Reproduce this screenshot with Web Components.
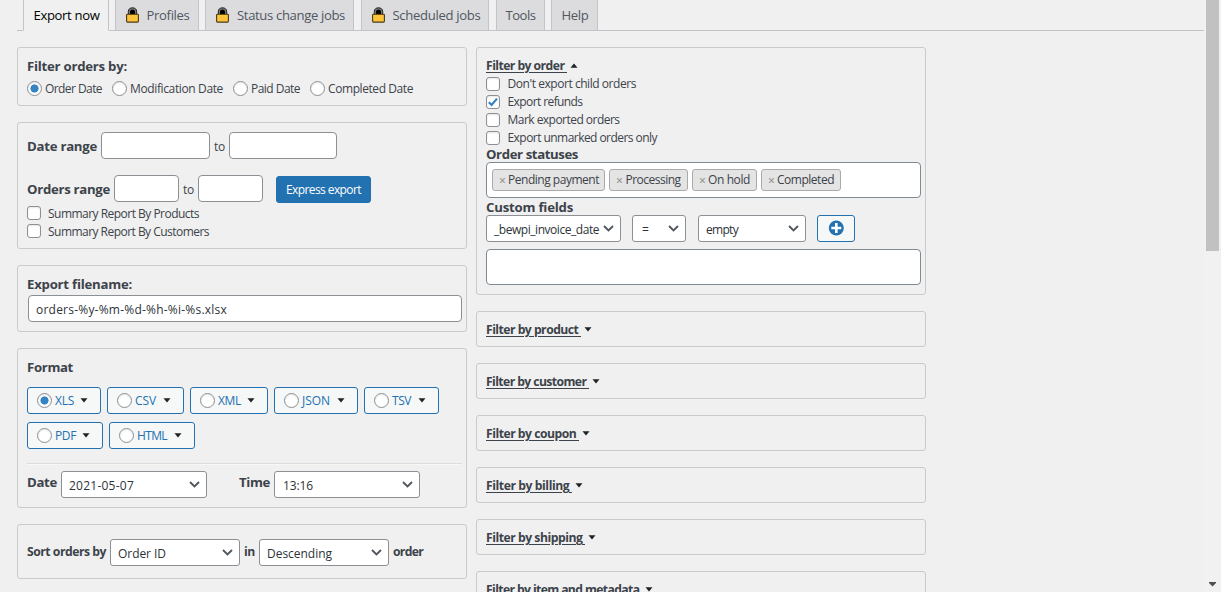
<!DOCTYPE html>
<html lang="en">
<head>
<meta charset="utf-8">
<title>Export orders</title>
<style>
  html, body {
    margin: 0;
    height: 100%;
    overflow: hidden;
    background: #f0f0f0;
  }
  body {
    font: 12px/18px "Open Sans", "Noto Sans", sans-serif;
    color: #3c434a;
  }
</style>
</head>
<body>
<export-page></export-page>

<script>
const define = (name, css, html, setup) => {
  customElements.define(name, class extends HTMLElement {
    constructor() {
      super();
      this.attachShadow({ mode: 'open' });
    }

    connectedCallback() {
      this.shadowRoot.innerHTML = `<style>* { box-sizing: border-box; } ${css}</style>${html}`;
      if (setup) setup(this, this.shadowRoot);
    }
  });
};

// Text run with a set width: the tracking is spread over its characters.
define('ui-text', `
  :host {
    display: inline-block;
    flex: none;
    white-space: pre;
  }
  :host([bold]) { font-weight: 700; }
  :host([semi]) { font-weight: 700; font-size: 12.2px; }
  :host([big]) { font-size: 13.2px; }
  :host([link]) span { text-decoration: underline; text-underline-offset: 2px; }
`, '<span><slot></slot></span>', (host, root) => {
  const w = parseFloat(host.getAttribute('w'));
  if (!w) return;
  const span = root.querySelector('span');
  const natural = span.getBoundingClientRect().width;
  host.style.letterSpacing = `${(w - natural) / host.textContent.length}px`;
  host.style.width = `${w}px`;
});

define('ui-row', `
  :host {
    display: flex;
    align-items: center;
    flex: none;
  }
`, '<slot></slot>', (host) => {
  for (const [attr, prop] of [['h', 'height'], ['gap', 'gap'], ['top', 'marginTop']]) {
    if (host.hasAttribute(attr)) host.style[prop] = `${host.getAttribute(attr)}px`;
  }
});

define('ui-panel', `
  :host {
    display: flex;
    flex-direction: column;
    box-sizing: border-box;
    flex: none;
    width: 450px;
    padding: 0 4px 0 9px;
    border: 1px solid #c9cacc;
    border-radius: 3px;
  }
`, '<slot></slot>', (host) => {
  host.style.height = `${host.getAttribute('h')}px`;
});

define('ui-radio', `
  :host {
    display: block;
    flex: none;
    box-sizing: border-box;
    width: 15px;
    height: 15px;
    margin-left: -0.5px;
    margin-right: -0.5px;
    border: 1px solid #8c8f94;
    border-radius: 50%;
    background: #fff;
    box-shadow: inset 0 1px 2px rgba(0, 0, 0, 0.1);
  }
  :host([checked]) { background: radial-gradient(circle, #3582c4 3.7px, #fff 4.4px); }
`, '');

define('ui-checkbox', `
  :host {
    display: block;
    flex: none;
    box-sizing: border-box;
    width: 14px;
    height: 14px;
    border: 1px solid #8c8f94;
    border-radius: 3px;
    background: #fff;
    box-shadow: inset 0 1px 2px rgba(0, 0, 0, 0.1);
  }
  svg { display: none; }
  :host([checked]) svg { display: block; }
`, `<svg width="12" height="12" viewBox="0 0 12 12">
  <path d="M1.8 6.2 4.6 9 10 2.6" fill="none" stroke="#3582c4" stroke-width="2.2"/>
</svg>`);

define('ui-input', `
  :host {
    display: flex;
    align-items: center;
    flex: none;
    box-sizing: border-box;
    height: 27px;
    padding: 2px 7px 0;
    border: 1px solid #8c8f94;
    border-radius: 4px;
    background: #fff;
    color: #2c3338;
  }
  :host([tall]) {
    height: 36px;
    padding: 0 5px;
    gap: 4px;
    border-color: #7e8993;
  }
`, '<slot></slot>', (host) => {
  host.style.width = `${host.getAttribute('w')}px`;
});

define('ui-select', `
  :host {
    display: flex;
    align-items: center;
    justify-content: space-between;
    flex: none;
    box-sizing: border-box;
    height: 27px;
    padding: 0 6px 0 7px;
    border: 1px solid #8c8f94;
    border-radius: 3px;
    background: #fff;
    color: #2c3338;
  }
  div { padding-top: 2px; }
`, `<div><slot></slot></div>
<svg width="11" height="7" viewBox="0 0 11 7">
  <path d="M1 1 5.5 5.4 10 1" fill="none" stroke="#50575e" stroke-width="1.9"/>
</svg>`, (host) => {
  host.style.width = `${host.getAttribute('w')}px`;
});

define('ui-arrow', `
  :host { display: block; flex: none; }
  :host([up]) svg { transform: rotate(180deg); }
  svg { display: block; }
`, `<svg width="8" height="5" viewBox="0 0 8 5"><path d="M0.5 0.2H7.5L4 4.4Z" fill="#1d2327"/></svg>`);

define('ui-button', `
  :host {
    display: flex;
    align-items: center;
    flex: none;
    justify-content: center;
    box-sizing: border-box;
    height: 27px;
    border: 1px solid #2271b1;
    border-radius: 3px;
    background: #f6f7f7;
    color: #2271b1;
  }
  :host([primary]) { background: #2271b1; color: #fff; }
`, '<slot></slot>', (host) => {
  host.style.width = `${host.getAttribute('w')}px`;
});

define('format-option', `
  :host { display: block; }
  ui-button { justify-content: flex-start; padding-left: 9px; }
  ui-text { margin-left: 4px; }
  ui-arrow { margin-left: auto; margin-right: 12px; }
`, '', (host, root) => {
  const checked = host.hasAttribute('checked') ? 'checked' : '';
  root.innerHTML += `
    <ui-button w="${host.getAttribute('w')}">
      <ui-radio ${checked}></ui-radio>
      <ui-text w="${host.getAttribute('tw')}">${host.getAttribute('label')}</ui-text>
      <ui-arrow></ui-arrow>
    </ui-button>`;
});

define('status-chip', `
  :host {
    display: flex;
    align-items: center;
    flex: none;
    box-sizing: border-box;
    height: 22px;
    padding: 0 0 0 6px;
    border: 1px solid #aaa;
    border-radius: 3px;
    background: #e4e4e4;
    color: #3c434a;
  }
  i {
    width: 9px;
    font-style: normal;
    font-weight: 600;
    color: #999;
    padding-top: 1px;
  }
`, '<i>×</i><slot></slot>', (host) => {
  host.style.width = `${host.getAttribute('w')}px`;
});

define('filter-heading', `
  :host { display: flex; align-items: center; }
  ui-arrow { margin: 0 0 1px 3px; }
`, '', (host, root) => {
  const up = host.hasAttribute('open') ? 'up' : '';
  root.innerHTML += `
    <ui-text semi link w="${host.getAttribute('w')}">${host.getAttribute('label')} </ui-text>
    <ui-arrow ${up}></ui-arrow>`;
});

define('lock-icon', `
  :host { display: block; width: 13px; height: 16px; margin-right: 8px; }
  svg { display: block; }
`, `<svg width="13" height="16" viewBox="0 0 13 16">
  <path d="M2.3 8V4.6C2.3 2 4.2 0.8 6.5 0.8S10.7 2 10.7 4.6V8Z" fill="#777" stroke="#222" stroke-width="1"/>
  <path d="M4 8V5C4 3.4 5 2.8 6.5 2.8S9 3.4 9 5V8Z" fill="#000"/>
  <rect x="0.6" y="7.3" width="11.8" height="7.8" rx="0.8" fill="#fdc33b" stroke="#4a3a14" stroke-width="1.1"/>
</svg>`);

define('nav-tab', `
  :host {
    display: flex;
    align-items: center;
    flex: none;
    box-sizing: border-box;
    height: 31px;
    padding: 0 0 0 9.5px;
    border: 1px solid #c3c4c7;
    border-top: 0;
    background: #dcdcde;
    color: #50575e;
    font-size: 13.1px;
  }
  :host([active]) {
    background: #f0f0f0;
    border-bottom-color: #f0f0f0;
    color: #000;
  }
`, '<slot></slot>', (host) => {
  host.style.width = `${host.getAttribute('w')}px`;
});

define('page-scrollbar', `
  :host {
    display: flex;
    flex-direction: column;
    align-items: center;
    justify-content: space-between;
    width: 17px;
    height: 592px;
    background: #f1f1f1;
  }
  .thumb { width: 13px; height: 251px; background: #c1c1c1; }
  svg { display: block; margin-bottom: 5px; }
`, `<div class="thumb"></div>
<svg width="7" height="5" viewBox="0 0 7 5"><path d="M0 0H7V1L3.5 4.5 0 1Z" fill="#505050"/></svg>`);

define('export-page', `
  :host { display: flex; height: 592px; overflow: hidden; }
  main { width: 1204px; }
  nav {
    display: flex;
    height: 31px;
    margin-left: 17px;
    padding-left: 6px;
    gap: 6px;
    background: linear-gradient(#c3c4c7, #c3c4c7) left bottom / 100% 1px no-repeat;
  }
  .columns { display: flex; gap: 9px; margin: 16px 0 0 17px; }
  .column { display: flex; flex-direction: column; gap: 16px; }
  .rule { flex: none; margin-top: 14px; height: 2px; background: #dcdcde; border-bottom: 1px solid #f6f7f7; }
  .push-right { margin-left: 9px; }
  .low ui-text { padding-top: 2px; }
`, `
<main>
  <nav>
    <nav-tab w="86" active><ui-text w="66">Export now</ui-text></nav-tab>
    <nav-tab w="84"><lock-icon></lock-icon><ui-text w="43">Profiles</ui-text></nav-tab>
    <nav-tab w="149"><lock-icon></lock-icon><ui-text w="108" style="margin-left:0.5px">Status change jobs</ui-text></nav-tab>
    <nav-tab w="128" style="margin-left:1px"><lock-icon></lock-icon><ui-text w="88">Scheduled jobs</ui-text></nav-tab>
    <nav-tab w="49" style="margin-left:1px"><ui-text w="30" style="margin-left:-1px">Tools</ui-text></nav-tab>
    <nav-tab w="47"><ui-text w="27">Help</ui-text></nav-tab>
  </nav>

  <div class="columns">
    <div class="column">
      <ui-panel h="59">
        <ui-row h="20" top="8"><ui-text bold big w="100">Filter orders by:</ui-text></ui-row>
        <ui-row h="18" top="3" gap="10" class="low">
          <ui-row gap="4"><ui-radio checked></ui-radio><ui-text w="57">Order Date</ui-text></ui-row>
          <ui-row gap="4"><ui-radio></ui-radio><ui-text w="93">Modification Date</ui-text></ui-row>
          <ui-row gap="4"><ui-radio></ui-radio><ui-text w="49">Paid Date</ui-text></ui-row>
          <ui-row gap="4"><ui-radio></ui-radio><ui-text w="85">Completed Date</ui-text></ui-row>
        </ui-row>
      </ui-panel>

      <ui-panel h="127">
        <ui-row h="27" top="9" gap="4">
          <ui-text bold big w="70">Date range</ui-text>
          <ui-input w="109"></ui-input>
          <ui-text w="11" style="padding-top:2px">to</ui-text>
          <ui-input w="108"></ui-input>
        </ui-row>
        <ui-row h="27" top="16" gap="4">
          <ui-text bold big w="83">Orders range</ui-text>
          <ui-input w="65"></ui-input>
          <ui-text w="11" style="padding-top:2px">to</ui-text>
          <ui-input w="65"></ui-input>
          <ui-button primary w="95" class="push-right" style="margin-top:2px"><ui-text w="75">Express export</ui-text></ui-button>
        </ui-row>
        <ui-row h="18" top="2" gap="7" class="low"><ui-checkbox></ui-checkbox><ui-text w="151">Summary Report By Products</ui-text></ui-row>
        <ui-row h="18" gap="7" class="low"><ui-checkbox></ui-checkbox><ui-text w="161">Summary Report By Customers</ui-text></ui-row>
      </ui-panel>

      <ui-panel h="67">
        <ui-row h="20" top="8"><ui-text bold big w="105">Export filename:</ui-text></ui-row>
        <ui-input w="434" style="margin:1px 0 0 1px"><ui-text w="191">orders-%y-%m-%d-%h-%i-%s.xlsx</ui-text></ui-input>
      </ui-panel>

      <ui-panel h="160">
        <ui-row h="20" top="8"><ui-text bold big w="46">Format</ui-text></ui-row>
        <ui-row h="27" top="10" gap="6">
          <format-option w="74" tw="19" label="XLS" checked></format-option>
          <format-option w="77" tw="21" label="CSV"></format-option>
          <format-option w="78" tw="23" label="XML"></format-option>
          <format-option w="84" tw="28" label="JSON"></format-option>
          <format-option w="75" tw="19" label="TSV"></format-option>
        </ui-row>
        <ui-row h="27" top="8" gap="6">
          <format-option w="76" tw="21" label="PDF"></format-option>
          <format-option w="86" tw="30" label="HTML"></format-option>
        </ui-row>
        <div class="rule"></div>
        <ui-row h="27" top="6" gap="4">
          <ui-text bold big w="30" style="margin-bottom:6px">Date</ui-text>
          <ui-select w="146"><ui-text w="65">2021-05-07</ui-text></ui-select>
          <ui-text bold big w="31" style="margin:0 0 6px 28px">Time</ui-text>
          <ui-select w="146"><ui-text w="30" style="margin-left:1px">13:16</ui-text></ui-select>
        </ui-row>
      </ui-panel>

      <ui-panel h="55">
        <ui-row h="27" top="14" gap="4">
          <ui-text semi w="79" style="margin-bottom:2px">Sort orders by</ui-text>
          <ui-select w="130"><ui-text w="48">Order ID</ui-text></ui-select>
          <ui-text semi w="11" style="margin-bottom:2px">in</ui-text>
          <ui-select w="130"><ui-text w="65">Descending</ui-text></ui-select>
          <ui-text semi w="30" style="margin-bottom:2px">order</ui-text>
        </ui-row>
      </ui-panel>
    </div>

    <div class="column">
      <ui-panel h="248">
        <ui-row h="18" top="9"><filter-heading open w="81" label="Filter by order"></filter-heading></ui-row>
        <ui-row h="18" gap="7.5"><ui-checkbox></ui-checkbox><ui-text w="128.5">Don't export child orders</ui-text></ui-row>
        <ui-row h="18" gap="7.5"><ui-checkbox checked></ui-checkbox><ui-text w="75">Export refunds</ui-text></ui-row>
        <ui-row h="18" gap="7.5"><ui-checkbox></ui-checkbox><ui-text w="112">Mark exported orders</ui-text></ui-row>
        <ui-row h="18" gap="7.5"><ui-checkbox></ui-checkbox><ui-text w="149.5">Export unmarked orders only</ui-text></ui-row>
        <ui-row h="15"><ui-text bold big w="92" style="margin-bottom:2px">Order statuses</ui-text></ui-row>
        <ui-input tall w="435">
          <status-chip w="113"><ui-text w="91">Pending payment</ui-text></status-chip>
          <status-chip w="79"><ui-text w="55" style="margin-left:0.5px">Processing</ui-text></status-chip>
          <status-chip w="65"><ui-text w="42">On hold</ui-text></status-chip>
          <status-chip w="80"><ui-text w="57">Completed</ui-text></status-chip>
        </ui-input>
        <ui-row h="17"><ui-text bold big w="87">Custom fields</ui-text></ui-row>
        <ui-row h="27" gap="11">
          <ui-select w="135"><ui-text w="105">_bewpi_invoice_date</ui-text></ui-select>
          <ui-select w="54"><ui-text style="margin-left:2px">=</ui-text></ui-select>
          <ui-select w="108" style="margin-left:1px"><ui-text w="32">empty</ui-text></ui-select>
          <ui-button w="38">
            <svg width="16" height="16" viewBox="0 0 16 16" style="margin-bottom:1px">
              <circle cx="8.3" cy="8" r="7.5" fill="#2271b1"/>
              <path d="M8.3 3v10M3.3 8h10" stroke="#fff" stroke-width="2.6"/>
            </svg>
          </ui-button>
        </ui-row>
        <ui-input tall w="435" style="margin-top:7px"></ui-input>
      </ui-panel>

      <ui-panel h="36"><ui-row h="18" top="9"><filter-heading w="95" label="Filter by product"></filter-heading></ui-row></ui-panel>
      <ui-panel h="36"><ui-row h="18" top="9"><filter-heading w="103" label="Filter by customer"></filter-heading></ui-row></ui-panel>
      <ui-panel h="36"><ui-row h="18" top="9"><filter-heading w="93" label="Filter by coupon"></filter-heading></ui-row></ui-panel>
      <ui-panel h="36"><ui-row h="18" top="9"><filter-heading w="86" label="Filter by billing"></filter-heading></ui-row></ui-panel>
      <ui-panel h="36"><ui-row h="18" top="9"><filter-heading w="99" label="Filter by shipping"></filter-heading></ui-row></ui-panel>
      <ui-panel h="36"><ui-row h="18" top="9"><filter-heading w="156" label="Filter by item and metadata"></filter-heading></ui-row></ui-panel>
    </div>
  </div>
</main>
<page-scrollbar></page-scrollbar>
`);
</script>
</body>
</html>
